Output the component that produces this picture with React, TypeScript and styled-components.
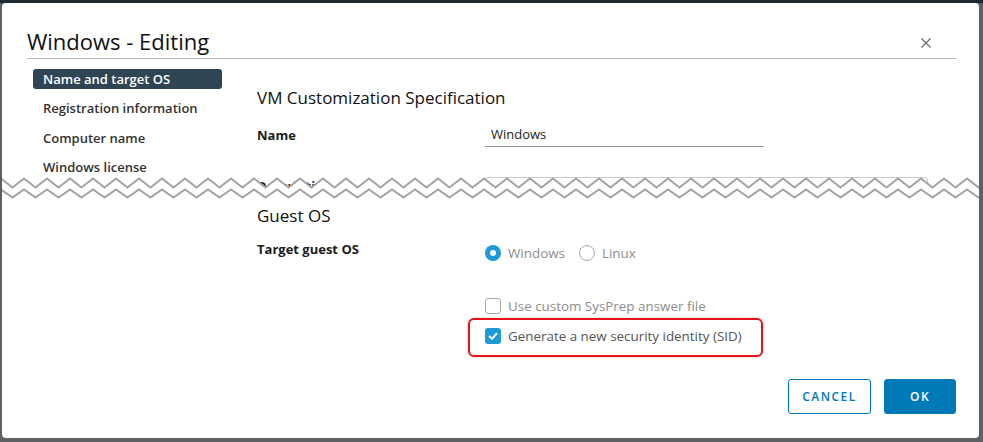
import React from "react";
import styled, { createGlobalStyle } from "styled-components";

const FONT = `"Open Sans", "Liberation Sans", sans-serif`;

const GlobalStyle = createGlobalStyle`
  html, body {
    margin: 0;
    padding: 0;
  }
  body {
    background: #5d6164;
    font-family: ${FONT};
  }
`;

const Page = styled.div`
  width: 983px;
  height: 442px;
  box-sizing: border-box;
  padding: 3px 4px 4px 2px;
  background: linear-gradient(#1c2a35 0 3px, #5d6164 3px);
`;

const Dialog = styled.div`
  height: 100%;
  background: #fff;
  border-radius: 4px;
  display: flex;
  flex-direction: column;
  overflow: hidden;
`;

const Header = styled.div`
  display: flex;
  align-items: center;
  justify-content: space-between;
  margin: 0 23px 0 25px;
  padding: 24px 0 3px;
  border-bottom: 1px solid #b9b9b9;
`;

const Title = styled.h1`
  margin: 0;
  font-size: 22px;
  line-height: 28px;
  font-weight: 400;
  color: #111;
`;

const CloseButton = styled.button`
  border: 0;
  background: none;
  padding: 0;
  margin: 3px 25px 0 0;
  width: 10px;
  height: 10px;
  display: flex;
`;

const Section = styled.div<{ $height?: number }>`
  position: relative;
  display: grid;
  grid-template-columns: 189px 1fr;
  column-gap: 35px;
  padding-left: 31px;
  ${(p) => (p.$height ? `height: ${p.$height}px; overflow: hidden;` : "")}
`;

const Nav = styled.nav`
  display: flex;
  flex-direction: column;
  gap: 9.3px;
  padding-top: 10px;
`;

const NavItem = styled.div<{ $active?: boolean }>`
  height: 20px;
  line-height: 20px;
  padding-left: 10px;
  border-radius: 3px;
  font-size: 13px;
  font-weight: 600;
  color: ${(p) => (p.$active ? "#fff" : "#333")};
  background: ${(p) => (p.$active ? "#2f4554" : "transparent")};
`;

const Content = styled.div<{ $top: number }>`
  display: flex;
  flex-direction: column;
  padding-top: ${(p) => p.$top}px;
`;

const SectionTitle = styled.h2`
  margin: 0;
  font-size: 17px;
  line-height: 24px;
  font-weight: 400;
  color: #111;
`;

const FormRow = styled.div<{ $gap: number; $align?: string }>`
  display: grid;
  grid-template-columns: 228px 1fr;
  align-items: ${(p) => p.$align || "center"};
  margin-top: ${(p) => p.$gap}px;
`;

const Label = styled.label<{ $shift?: number }>`
  font-size: 13px;
  line-height: 20px;
  font-weight: 700;
  color: #1b1b1b;
  margin-top: ${(p) => p.$shift || 0}px;
`;

const LineInput = styled.div`
  width: 279px;
  height: 24px;
  box-sizing: border-box;
  padding: 0 6px;
  line-height: 23px;
  font-size: 13px;
  color: #222;
  border-bottom: 1px solid #9a9a9a;
`;

const TextArea = styled.div`
  width: 443px;
  height: 60px;
  box-sizing: border-box;
  border: 1px solid #c9c9c9;
  border-radius: 3px;
`;

const Tear = styled.svg`
  position: absolute;
  left: 0;
  bottom: 0;
  width: 977px;
  height: 23px;
`;

const Controls = styled.div`
  display: flex;
  flex-direction: column;
  padding-top: 4px;
`;

const OptionRow = styled.div<{ $gap: number }>`
  position: relative;
  display: flex;
  align-items: center;
  gap: 14px;
  height: 20px;
  margin-top: ${(p) => p.$gap}px;
`;

const Option = styled.span<{ $dim?: boolean }>`
  display: flex;
  align-items: center;
  gap: 7px;
  font-size: 13.4px;
  color: ${(p) => (p.$dim ? "#8d8d8d" : "#555")};
`;

const Radio = styled.span<{ $checked?: boolean }>`
  width: 16px;
  height: 16px;
  box-sizing: border-box;
  border-radius: 50%;
  border: ${(p) => (p.$checked ? "none" : "1px solid #a8a8a8")};
  background: ${(p) => (p.$checked ? "#1e9ad6" : "#fff")};
  display: flex;
  align-items: center;
  justify-content: center;
  &::after {
    content: "";
    display: ${(p) => (p.$checked ? "block" : "none")};
    width: 6px;
    height: 6px;
    border-radius: 50%;
    background: #fff;
  }
`;

const Checkbox = styled.span<{ $checked?: boolean }>`
  width: 16px;
  height: 16px;
  box-sizing: border-box;
  border-radius: 3px;
  border: ${(p) => (p.$checked ? "none" : "1px solid #a8a8a8")};
  background: ${(p) => (p.$checked ? "#1e9ad6" : "#fff")};
  display: flex;
  align-items: center;
  justify-content: center;
`;

const Highlight = styled.div`
  position: absolute;
  left: -17px;
  top: -8px;
  width: 295px;
  height: 39px;
  box-sizing: border-box;
  border: 2px solid #e3141b;
  border-radius: 6px;
  box-shadow: 0 0 2px rgba(227, 20, 27, 0.35);
  pointer-events: none;
`;

const Footer = styled.div`
  margin-top: auto;
  display: flex;
  justify-content: flex-end;
  gap: 13px;
  padding: 0 23px 24px 0;
`;

const Button = styled.button<{ $primary?: boolean }>`
  height: 35px;
  min-width: ${(p) => (p.$primary ? 72 : 83)}px;
  box-sizing: border-box;
  border-radius: 3px;
  border: 1px solid #0079b8;
  background: ${(p) => (p.$primary ? "#0079b8" : "#fff")};
  color: ${(p) => (p.$primary ? "#fff" : "#0079b8")};
  font-family: ${FONT};
  font-size: 12px;
  font-weight: 600;
  letter-spacing: 0.12em;
  padding: 0 12px;
`;

function tearPath(offsetY: number, amp: number) {
  const period = 23;
  const pts: string[] = [];
  for (let x = -24; x <= 1000; x += period) {
    pts.push(`${x},${offsetY}`);
    pts.push(`${x + period / 2},${offsetY + amp}`);
  }
  return pts;
}

function TearEdge() {
  const upper = tearPath(2.5, 9);
  const lower = tearPath(13.5, 8);
  const fill = `M${upper.join(" L")} L1000,23 L-24,23 Z`;
  return (
    <Tear viewBox="0 0 977 23">
      <path d={fill} fill="#fff" />
      <polyline points={upper.join(" ")} fill="none" stroke="#a3a3a3" strokeWidth="2" />
      <polyline points={lower.join(" ")} fill="none" stroke="#a3a3a3" strokeWidth="2" />
    </Tear>
  );
}

export default function App() {
  return (
    <Page>
      <GlobalStyle />
      <Dialog>
        <Header>
          <Title>Windows - Editing</Title>
          <CloseButton aria-label="Close">
            <svg width="10" height="10" viewBox="0 0 10 10">
              <path d="M0.5 0.5 L9.5 9.5 M9.5 0.5 L0.5 9.5" stroke="#666" strokeWidth="1.2" />
            </svg>
          </CloseButton>
        </Header>

        <Section $height={140}>
          <Nav>
            <NavItem $active>Name and target OS</NavItem>
            <NavItem>Registration information</NavItem>
            <NavItem>Computer name</NavItem>
            <NavItem>Windows license</NavItem>
          </Nav>
          <Content $top={27}>
            <SectionTitle>VM Customization Specification</SectionTitle>
            <FormRow $gap={13}>
              <Label>Name</Label>
              <LineInput>Windows</LineInput>
            </FormRow>
            <FormRow $gap={30} $align="start">
              <Label $shift={-1}>Description</Label>
              <TextArea />
            </FormRow>
          </Content>
          <TearEdge />
        </Section>

        <Section>
          <div />
          <Content $top={5}>
            <SectionTitle>Guest OS</SectionTitle>
            <FormRow $gap={11} $align="start">
              <Label>Target guest OS</Label>
              <Controls>
                <OptionRow $gap={0}>
                  <Option $dim>
                    <Radio $checked />
                    Windows
                  </Option>
                  <Option $dim>
                    <Radio />
                    Linux
                  </Option>
                </OptionRow>
                <OptionRow $gap={33}>
                  <Option $dim>
                    <Checkbox />
                    Use custom SysPrep answer file
                  </Option>
                </OptionRow>
                <OptionRow $gap={10}>
                  <Option>
                    <Checkbox $checked>
                      <svg width="10" height="8" viewBox="0 0 10 8">
                        <path d="M1 4 L4 6.8 L9 1.2" fill="none" stroke="#fff" strokeWidth="2" />
                      </svg>
                    </Checkbox>
                    Generate a new security identity (SID)
                  </Option>
                  <Highlight />
                </OptionRow>
              </Controls>
            </FormRow>
          </Content>
        </Section>

        <Footer>
          <Button>CANCEL</Button>
          <Button $primary>OK</Button>
        </Footer>
      </Dialog>
    </Page>
  );
}
